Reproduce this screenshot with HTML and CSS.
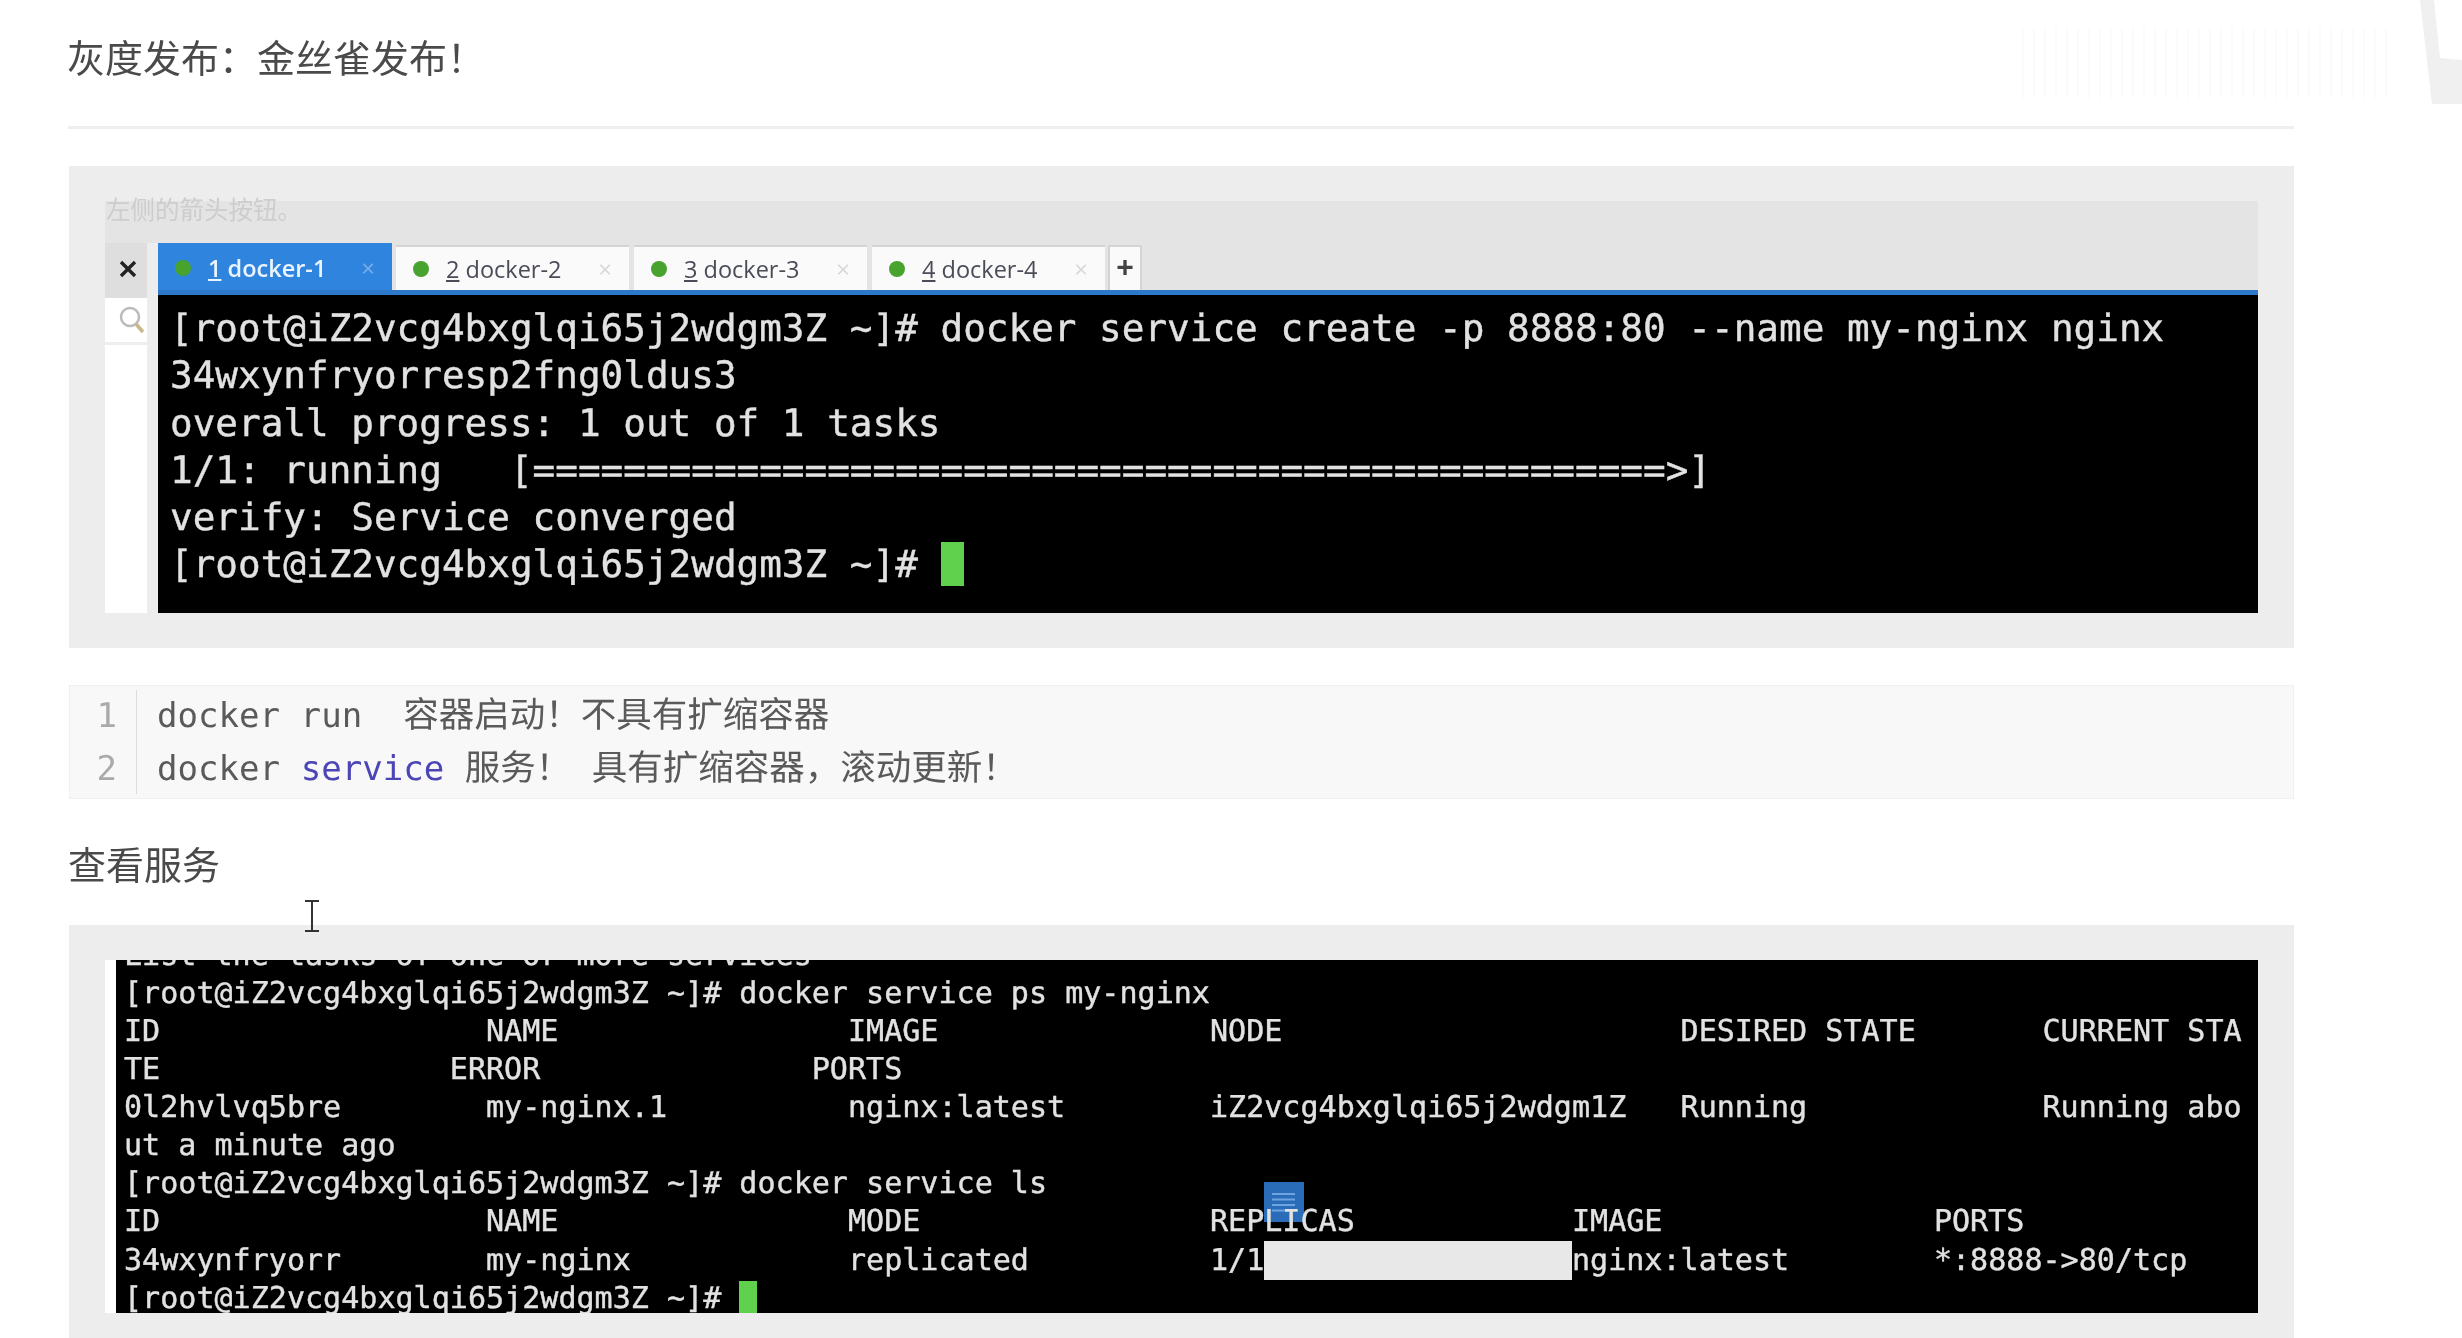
FILE: index.html
```html
<!DOCTYPE html>
<html lang="zh">
<head>
<meta charset="utf-8">
<title>灰度发布</title>
<link rel="stylesheet" href="styles.css">
</head>
<body>
<div class="page">
  <h2 class="title">灰度发布&#xFF1A;金丝雀发布&#xFF01;</h2>

  <div class="wm" aria-hidden="true"></div>
  <svg class="corner" width="42" height="106" viewBox="0 0 42 106"><path d="M0 0H14L20 58L42 60V104H12Z" fill="#f0f0f0"/></svg>

  <section class="shot">
    <div class="caption">左侧的箭头按钮。</div>
    <div class="main">
      <aside class="rail">
        <div class="rail-close">
          <svg width="20" height="20" viewBox="0 0 20 20"><path d="M3 3L17 17M17 3L3 17" stroke="#222" stroke-width="3.4" fill="none"/></svg>
        </div>
        <div class="rail-search">
          <svg width="28" height="30" viewBox="0 0 28 30"><circle cx="12" cy="12" r="9" fill="#fff" stroke="#bbb" stroke-width="2.5"/><path d="M18 19L25 27" stroke="#c9b98a" stroke-width="3.5" fill="none"/></svg>
        </div>
      </aside>
      <div class="pane">
        <div class="tabs">
          <div class="tab tab-on"><i class="dot"></i><span class="tab-name"><u>1</u> docker-1</span><span class="tab-x">×</span></div>
          <div class="tab"><i class="dot"></i><span class="tab-name"><u>2</u> docker-2</span><span class="tab-x">×</span></div>
          <div class="tab"><i class="dot"></i><span class="tab-name"><u>3</u> docker-3</span><span class="tab-x">×</span></div>
          <div class="tab"><i class="dot"></i><span class="tab-name"><u>4</u> docker-4</span><span class="tab-x">×</span></div>
          <div class="tab-add">+</div>
        </div>
        <pre class="term term-lg">[root@iZ2vcg4bxglqi65j2wdgm3Z ~]# docker service create -p 8888:80 --name my-nginx nginx
34wxynfryorresp2fng0ldus3
overall progress: 1 out of 1 tasks
1/1: running   [==================================================&gt;]
verify: Service converged
[root@iZ2vcg4bxglqi65j2wdgm3Z ~]# <span class="cursor cursor-lg"></span></pre>
      </div>
    </div>
  </section>

  <div class="code">
    <div class="gutter"><span>1</span><span>2</span></div>
    <div class="lines">
      <div class="line">docker run  <span class="cjk">容器启动&#xFF01;不具有扩缩容器</span></div>
      <div class="line">docker <span class="kw">service</span> <span class="cjk">服务&#xFF01;</span> <span class="cjk">具有扩缩容器&#xFF0C;滚动更新&#xFF01;</span></div>
    </div>
  </div>

  <h3 class="subhead">查看服务</h3>

  <section class="shot shot-b">
    <div class="main">
      <aside class="rail rail-thin"></aside>
      <div class="term-wrap">
        <svg class="doc" width="40" height="40" viewBox="0 0 40 40"><rect width="40" height="40" fill="#2a6cb8"/><path d="M8 12H31M8 17.500H31M8 23H31M8 28.500H31" stroke="#6fa4e0" stroke-width="2" fill="none"/></svg>
        <pre class="term term-sm">List the tasks of one or more services
[root@iZ2vcg4bxglqi65j2wdgm3Z ~]# docker service ps my-nginx
ID                  NAME                IMAGE               NODE                      DESIRED STATE       CURRENT STA
TE                ERROR               PORTS
0l2hvlvq5bre        my-nginx.1          nginx:latest        iZ2vcg4bxglqi65j2wdgm1Z   Running             Running abo
ut a minute ago
[root@iZ2vcg4bxglqi65j2wdgm3Z ~]# docker service ls
ID                  NAME                MODE                REPLICAS            IMAGE               PORTS
34wxynfryorr        my-nginx            replicated          1/1<span class="sel">                 </span>nginx:latest        *:8888-&gt;80/tcp
[root@iZ2vcg4bxglqi65j2wdgm3Z ~]# <span class="cursor cursor-sm"></span></pre>
      </div>
    </div>
  </section>

  <svg class="ibeam" width="16" height="34" viewBox="0 0 16 34"><path d="M1 2H15M1 32H15M8 2V32" stroke="#333" stroke-width="2" fill="none"/></svg>
</div>
</body>
</html>
```

FILE: styles.css
```css
html, body {
  margin: 0;
  padding: 0;
  background: #fff;
}
body {
  width: 2462px;
  height: 1338px;
  overflow: hidden;
}
.page {
  position: relative;
  box-sizing: border-box;
  width: 2462px;
  height: 1338px;
  padding: 0 168px 0 69px;
  overflow: hidden;
  font-family: "Noto Sans CJK SC", "Noto Sans", sans-serif;
  filter: blur(0.7px);
}
.title {
  margin: 0 0 37px -1px;
  padding: 33px 0 47px 1px;
  border-bottom: 3px solid #eeeeee;
  font-size: 38px;
  line-height: 46px;
  font-weight: 400;
  color: #4a4a4a;
  text-indent: -2px;
}
.wm {
  position: absolute;
  left: 2022px;
  top: 28px;
  width: 370px;
  height: 70px;
  background: repeating-linear-gradient(90deg, #fbfbfb 0 2px, #ffffff 2px 11px);
}
.corner {
  position: absolute;
  left: 2420px;
  top: 0;
}
.shot {
  padding: 35px 36px;
  background: #ededed;
}
.caption {
  box-sizing: border-box;
  height: 42px;
  padding-left: 1px;
  background: #e4e4e4;
  color: #cdcdcd;
  font-size: 24.500px;
  line-height: 16px;
}
.main {
  display: flex;
}
.rail {
  flex: none;
  width: 42px;
  margin-right: 11px;
  background: #fff;
  display: flex;
  flex-direction: column;
}
.rail-close {
  box-sizing: border-box;
  height: 55px;
  padding: 0 0 3px 4px;
  background: #dedede;
  display: flex;
  align-items: center;
  justify-content: center;
}
.rail-search {
  box-sizing: border-box;
  height: 47px;
  padding-left: 12px;
  border-bottom: 3px solid #eeeeee;
  display: flex;
  align-items: center;
  justify-content: center;
}
.pane {
  flex: 1;
  min-width: 0;
}
.tabs {
  display: flex;
  align-items: flex-end;
  gap: 5px;
  height: 47px;
  background: #e4e4e4;
  border-bottom: 5px solid #2d78c8;
}
.tab {
  box-sizing: border-box;
  flex: none;
  width: 233px;
  height: 45px;
  padding: 0 17px;
  display: flex;
  align-items: center;
  background: #fafafa;
  border-top: 2px solid #d4d4d4;
  color: #4a4c58;
  font-family: "Open Sans", sans-serif;
  font-size: 23.500px;
}
.tab-on {
  width: 234px;
  height: 47px;
  margin-right: -1px;
  padding-top: 2px;
  background: #2f84de;
  border-top: 0;
  color: #eaf3ff;
  font-weight: 600;
}
.dot {
  flex: none;
  width: 16px;
  height: 16px;
  border-radius: 50%;
  background: #47a32e;
  margin-right: 17px;
}
.tab-name {
  flex: 1;
  white-space: pre;
}
.tab-x {
  color: #d8d8d8;
  font-size: 24px;
  font-weight: 400;
}
.tab-on .tab-x {
  color: #79aeea;
}
.tab-add {
  box-sizing: border-box;
  flex: none;
  width: 34px;
  height: 45px;
  margin-left: -2px;
  background: #fafafa;
  border: 2px solid #d4d4d4;
  border-bottom: 0;
  color: #444;
  font: 700 30px/40px "Liberation Sans", sans-serif;
  text-align: center;
}
.term {
  margin: 0;
  background: #000;
  color: #e2e2e2;
  font-family: "DejaVu Sans Mono", monospace;
  white-space: pre;
  text-rendering: geometricPrecision;
  -webkit-text-stroke: 0.4px #e2e2e2;
}
.term-lg {
  height: 318px;
  box-sizing: border-box;
  padding: 10px 0 0 12px;
  font-size: 37.65px;
  line-height: 47.3px;
}
.cursor {
  display: inline-block;
  background: #5fd14c;
  vertical-align: top;
}
.cursor-lg {
  width: 23px;
  height: 44px;
  margin-top: 1px;
}
.cursor-sm {
  width: 18px;
  height: 36px;
  margin-top: 1px;
}
.code {
  display: flex;
  box-sizing: border-box;
  height: 114px;
  margin-top: 37px;
  padding: 4px 0;
  background: #f8f8f8;
  border: 1px solid #f0f0f0;
  font-family: "DejaVu Sans Mono", monospace;
  font-size: 34.100px;
  line-height: 53px;
  color: #5a5a5a;
  text-rendering: geometricPrecision;
}
.gutter {
  flex: none;
  width: 67px;
  margin-right: 20px;
  padding-right: 19px;
  box-sizing: border-box;
  border-right: 1px solid #dddddd;
  display: flex;
  flex-direction: column;
  align-items: flex-end;
  color: #aaaaaa;
}
.line {
  height: 53px;
  white-space: pre;
}
.cjk {
  font-family: "Noto Sans CJK SC", sans-serif;
  font-size: 35.500px;
  line-height: 0;
}
.kw {
  color: #4b45b5;
}
.subhead {
  margin: 39px 0 37px -1px;
  font-size: 38px;
  line-height: 50px;
  font-weight: 400;
  color: #4a4a4a;
}
.shot-b {
  padding-top: 35px;
  padding-bottom: 60px;
}
.rail-thin {
  width: 11px;
  margin-right: 0;
}
.term-wrap {
  position: relative;
  flex: 1;
  min-width: 0;
  height: 353px;
  overflow: hidden;
  background: #000;
}
.term-sm {
  position: relative;
  margin-top: -23px;
  padding-left: 8px;
  background: transparent;
  font-size: 30.070px;
  line-height: 38.070px;
}
.doc {
  position: absolute;
  left: 1148px;
  top: 222px;
}
.sel {
  background: #e8e8e8;
  padding: 2px 0;
}
.ibeam {
  position: absolute;
  left: 304px;
  top: 899px;
}
```
